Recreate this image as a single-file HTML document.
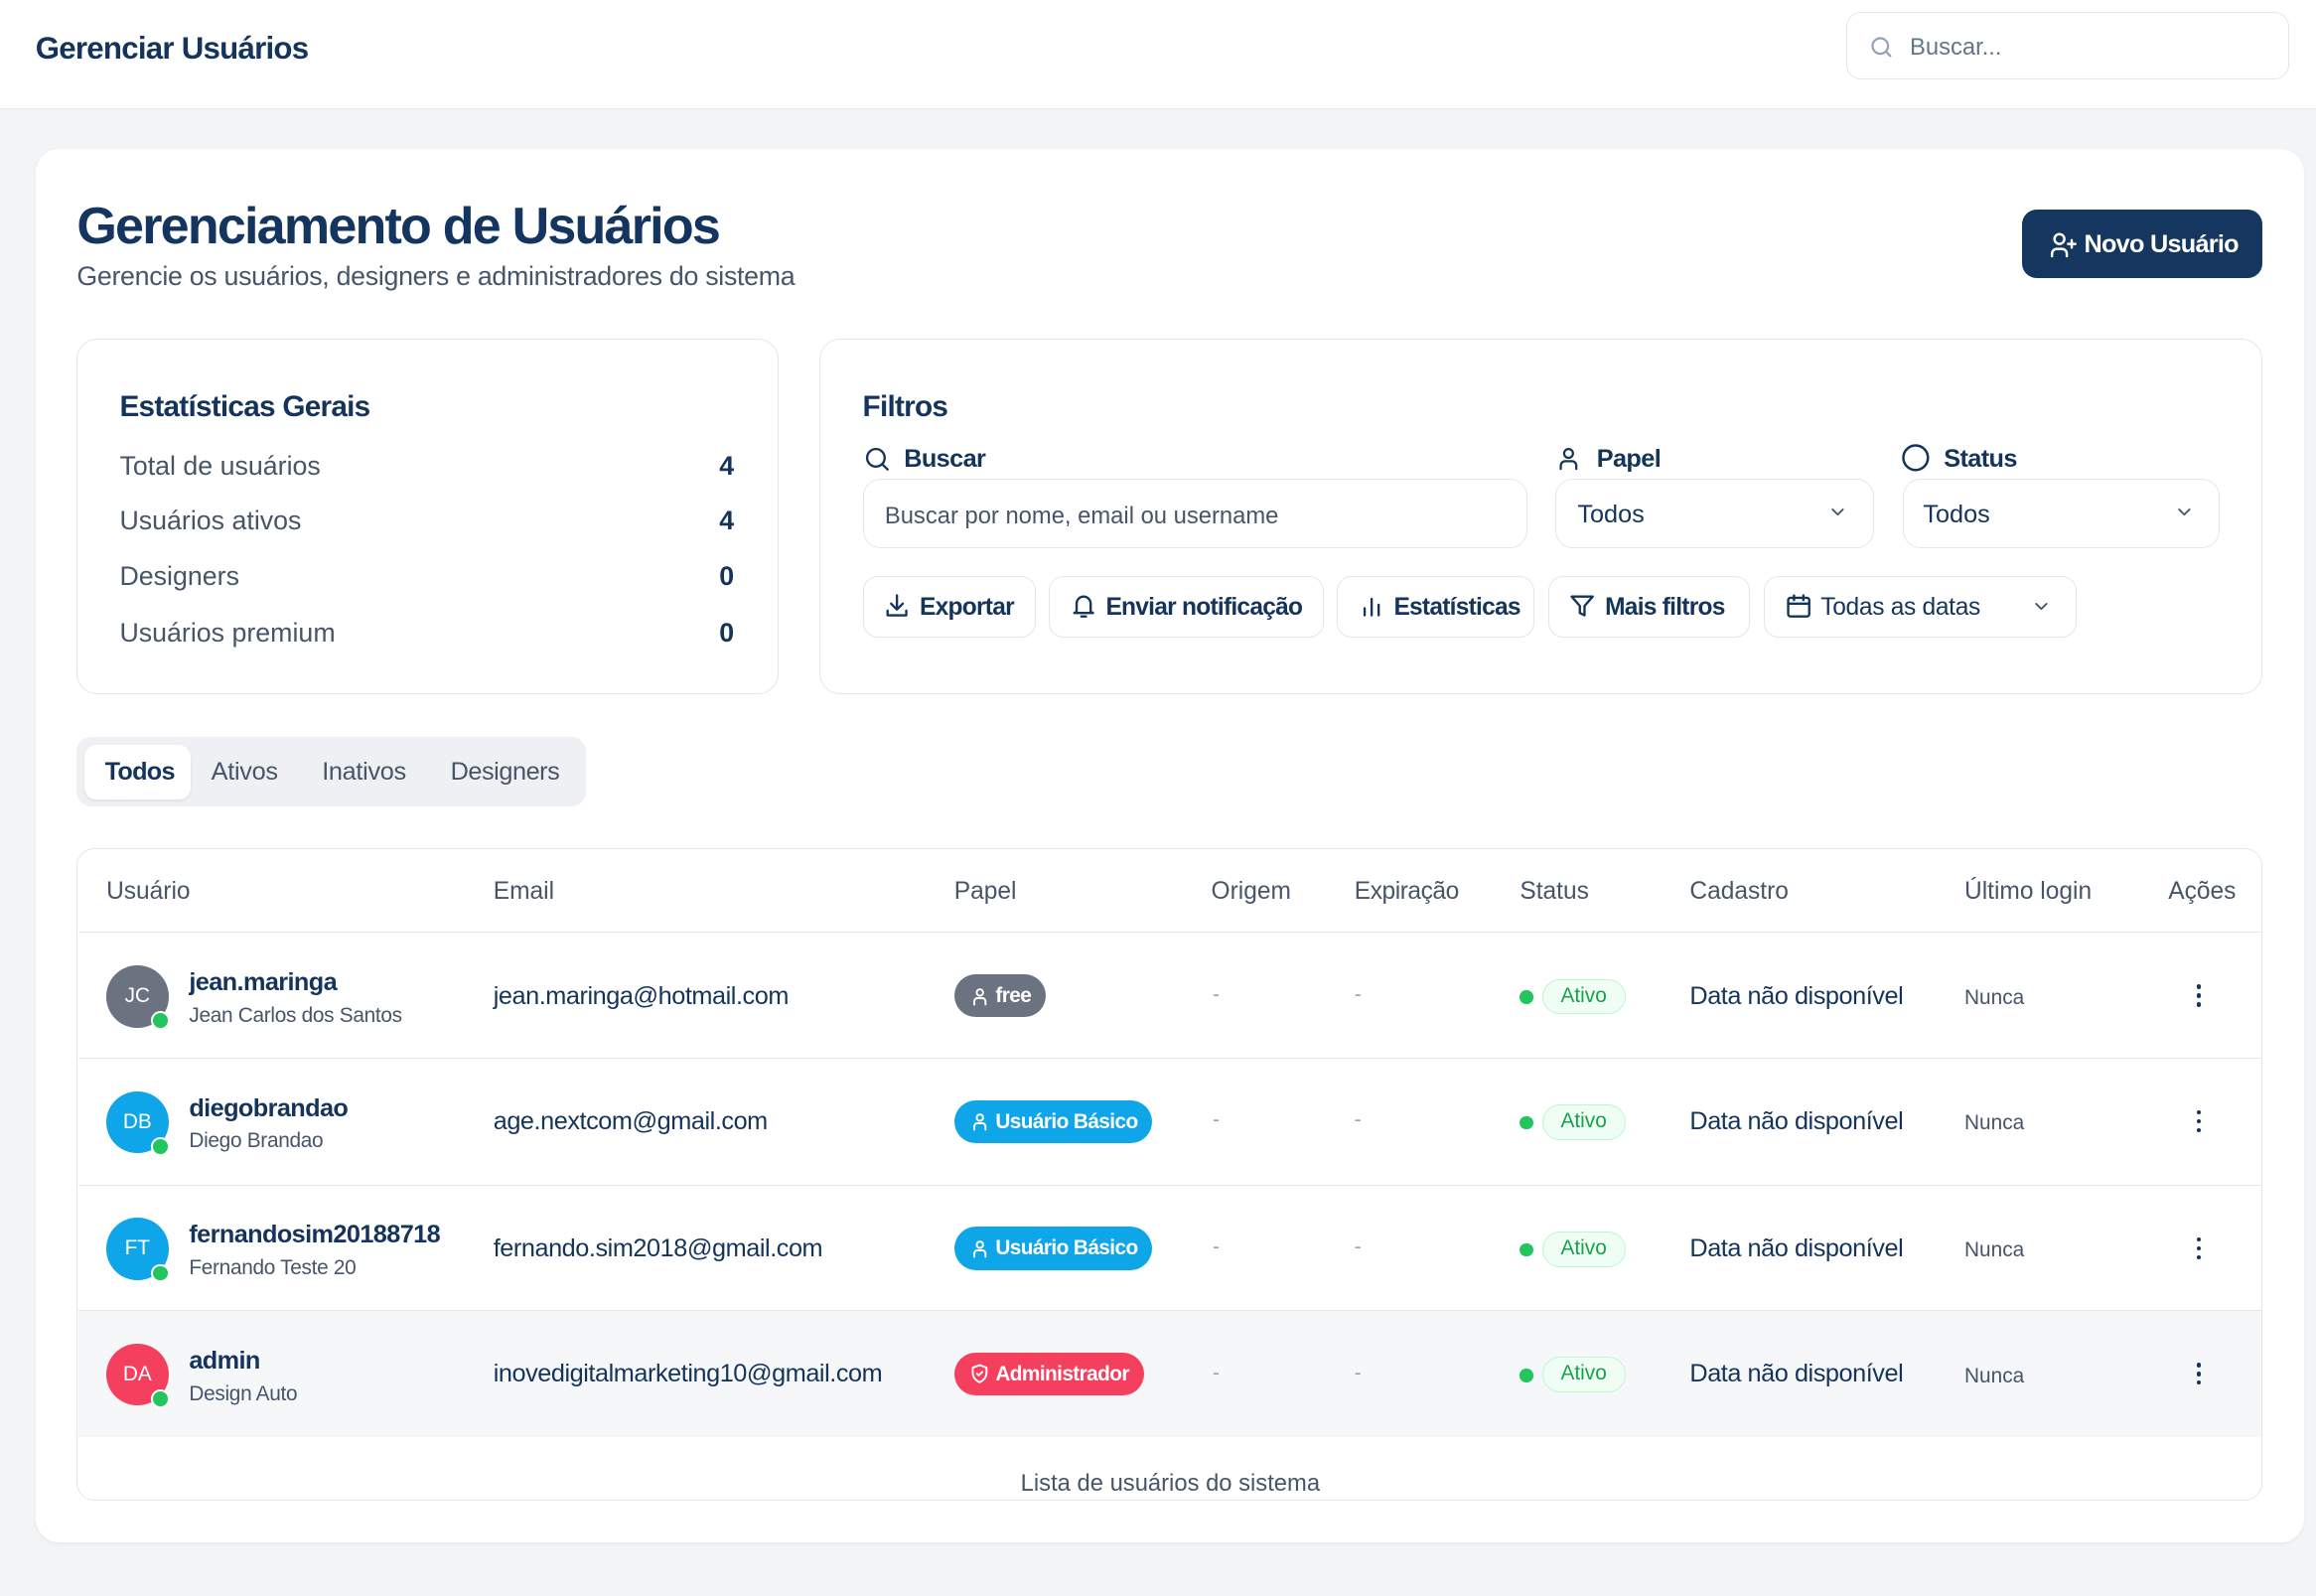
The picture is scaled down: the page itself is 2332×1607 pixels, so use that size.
<!DOCTYPE html>
<html><head><meta charset="utf-8"><style>
html,body{margin:0;padding:0;width:2332px;height:1607px;overflow:hidden;background:#f3f4f6}
#w{zoom:1.48724;width:1568px;height:1081px;position:relative;font-family:"Liberation Sans",sans-serif;color:#14345c}
.a{position:absolute;white-space:nowrap}
.box{position:absolute;box-sizing:border-box;border:1px solid #e3e6ea;background:#fff}
svg{position:absolute;fill:none;stroke-linecap:round;stroke-linejoin:round}
.btn{position:absolute;box-sizing:border-box;border:1px solid #e3e6ea;border-radius:10px;background:#fff;height:42px;top:390px;font-size:16.5px;line-height:42px;color:#14345c;font-weight:600;letter-spacing:-0.5px}
.h{top:604px;transform:translateY(-50%);font-size:16.5px;color:#475569}
.row{position:absolute;left:53px;width:1478px;height:85px;border-top:1px solid #e5e7eb}
.av{position:absolute;left:19px;top:22px;width:42px;height:42px;border-radius:50%;color:#fff;font-size:14px;text-align:center;line-height:42px}
.dot{position:absolute;left:49px;top:53px;width:10px;height:10px;border-radius:50%;background:#22c55e;border:1.5px solid #fff}
.nm{position:absolute;left:75px;top:24px;font-size:17px;font-weight:600;color:#14345c;letter-spacing:-0.4px}
.sn{position:absolute;left:75px;top:48px;font-size:14px;color:#475569;letter-spacing:-0.2px}
.em{position:absolute;left:281px;top:33px;font-size:17px;color:#14345c;letter-spacing:-0.3px}
.bd{position:absolute;left:593px;top:28px;height:29px;border-radius:15px;color:#fff;font-size:14px;font-weight:600;line-height:29px;padding:0 10px 0 28px;letter-spacing:-0.4px}
.ds{position:absolute;top:34px;font-size:14px;color:#94a3b8}
.gd{position:absolute;left:976px;top:39px;width:9px;height:9px;border-radius:50%;background:#22c55e}
.pl{position:absolute;left:991px;top:31px;height:24px;box-sizing:border-box;border:1px solid #bbf7d0;background:#f0fdf4;border-radius:12px;color:#16a34a;font-size:14px;line-height:22px;padding:0 12px}
.cd{position:absolute;left:1091px;top:33px;font-size:17px;color:#14345c;letter-spacing:-0.3px}
.nu{position:absolute;left:1277px;top:36px;font-size:14px;color:#475569}
.kb{position:absolute;left:1434px;top:35px;width:3px}
.kb i{display:block;width:3px;height:3px;border-radius:50%;background:#14345c;margin-bottom:3px}
</style></head><body><div id="w">
<div class="a" style="left:0;top:0;width:1568px;height:73px;background:#fff;border-bottom:1px solid #e5e7eb"></div>
<div class="a" style="left:24px;top:21px;font-size:21px;font-weight:600;color:#14345c;letter-spacing:-0.5px">Gerenciar Usuários</div>
<div class="box" style="left:1250px;top:8px;width:300px;height:46px;border-radius:10px"></div>
<svg style="left:1265px;top:23px" width="18" height="18" viewBox="0 0 24 24" stroke="#94a3b8" stroke-width="2"><circle cx="11" cy="11" r="7"/><path d="M20 20l-4-4"/></svg>
<div class="a" style="left:1293px;top:23px;font-size:16px;color:#64748b">Buscar...</div>

<div class="a" style="left:24px;top:101px;width:1536px;height:943px;background:#fff;border-radius:16px;box-shadow:0 1px 3px rgba(0,0,0,.05)"></div>
<div class="a" style="left:52px;top:133px;font-size:35px;font-weight:700;color:#133560;letter-spacing:-1.2px">Gerenciamento de Usuários</div>
<div class="a" style="left:52px;top:177px;font-size:18px;color:#475569;letter-spacing:-0.2px">Gerencie os usuários, designers e administradores do sistema</div>
<div class="a" style="left:1369px;top:142px;width:163px;height:46px;background:#14365f;border-radius:10px"></div>
<svg style="left:1386px;top:156px" width="22" height="20" viewBox="0 0 24 24" stroke="#fff" stroke-width="2"><circle cx="9" cy="7" r="4"/><path d="M3 21v-2a4 4 0 014-4h4a4 4 0 014 4v2M19 8v6M16 11h6"/></svg>
<div class="a" style="left:1411px;top:156px;font-size:17px;color:#fff;font-weight:600;letter-spacing:-0.5px">Novo Usuário</div>

<div class="box" style="left:52px;top:229px;width:475px;height:241px;border-radius:14px"></div>
<div class="a" style="left:81px;top:264px;font-size:20px;font-weight:600;letter-spacing:-0.5px">Estatísticas Gerais</div>
<div class="a" style="left:81px;top:305px;font-size:18px;color:#475569">Total de usuários</div><div class="a" style="left:487px;top:305px;font-size:18px;font-weight:600">4</div>
<div class="a" style="left:81px;top:342px;font-size:18px;color:#475569">Usuários ativos</div><div class="a" style="left:487px;top:342px;font-size:18px;font-weight:600">4</div>
<div class="a" style="left:81px;top:380px;font-size:18px;color:#475569">Designers</div><div class="a" style="left:487px;top:380px;font-size:18px;font-weight:600">0</div>
<div class="a" style="left:81px;top:418px;font-size:18px;color:#475569">Usuários premium</div><div class="a" style="left:487px;top:418px;font-size:18px;font-weight:600">0</div>

<div class="box" style="left:555px;top:229px;width:977px;height:241px;border-radius:14px"></div>
<div class="a" style="left:584px;top:264px;font-size:20px;font-weight:600;letter-spacing:-0.5px">Filtros</div>
<svg style="left:584px;top:301px" width="19" height="19" viewBox="0 0 24 24" stroke="#14345c" stroke-width="2"><circle cx="11" cy="11" r="7.5"/><path d="M21 21l-4.5-4.5"/></svg>
<div class="a" style="left:612px;top:301px;font-size:17px;font-weight:600;letter-spacing:-0.4px">Buscar</div>
<svg style="left:1053px;top:301px" width="18" height="19" viewBox="0 0 24 24" stroke="#14345c" stroke-width="2"><circle cx="12" cy="7" r="4"/><path d="M5 21v-3a4 4 0 014-4h6a4 4 0 014 4v3"/></svg>
<div class="a" style="left:1081px;top:301px;font-size:17px;font-weight:600;letter-spacing:-0.4px">Papel</div>
<svg style="left:1287px;top:300px" width="20" height="20" viewBox="0 0 24 24" stroke="#14345c" stroke-width="2"><circle cx="12" cy="12" r="10"/></svg>
<div class="a" style="left:1316px;top:301px;font-size:17px;font-weight:600;letter-spacing:-0.4px">Status</div>
<div class="box" style="left:584px;top:324px;width:450px;height:47px;border-radius:12px"></div>
<div class="a" style="left:599px;top:340px;font-size:16px;color:#475569">Buscar por nome, email ou username</div>
<div class="box" style="left:1053px;top:324px;width:216px;height:47px;border-radius:12px"></div>
<div class="a" style="left:1068px;top:339px;font-size:17px">Todos</div>
<svg style="left:1237px;top:341px" width="14" height="12" viewBox="0 0 24 24" stroke="#475569" stroke-width="2.5"><path d="M5 8l7 7 7-7"/></svg>
<div class="box" style="left:1288px;top:324px;width:215px;height:47px;border-radius:12px"></div>
<div class="a" style="left:1302px;top:339px;font-size:17px">Todos</div>
<svg style="left:1472px;top:341px" width="14" height="12" viewBox="0 0 24 24" stroke="#475569" stroke-width="2.5"><path d="M5 8l7 7 7-7"/></svg>

<div class="btn" style="left:584px;width:117px;padding-left:38px">Exportar</div>
<svg style="left:598px;top:401px" width="19" height="19" viewBox="0 0 24 24" stroke="#14345c" stroke-width="2"><path d="M12 3v12M7 10l5 5 5-5M4 16v4h16v-4"/></svg>
<div class="btn" style="left:710px;width:186px;padding-left:38px">Enviar notificação</div>
<svg style="left:724px;top:401px" width="19" height="19" viewBox="0 0 24 24" stroke="#14345c" stroke-width="2"><path d="M6 17V10a6 6 0 0112 0v7l2 1H4zM10 21h4"/></svg>
<div class="btn" style="left:905px;width:134px;padding-left:38px">Estatísticas</div>
<svg style="left:919px;top:401px" width="19" height="19" viewBox="0 0 24 24" stroke="#14345c" stroke-width="2"><path d="M6 20v-6M12 20V6M18 20v-9"/></svg>
<div class="btn" style="left:1048px;width:137px;padding-left:38px">Mais filtros</div>
<svg style="left:1062px;top:401px" width="19" height="19" viewBox="0 0 24 24" stroke="#14345c" stroke-width="2"><path d="M3 4h18l-7 8v8l-4-2v-6z"/></svg>
<div class="btn" style="left:1194px;width:212px;padding-left:38px;font-weight:400;letter-spacing:-0.2px">Todas as datas</div>
<svg style="left:1208px;top:401px" width="19" height="19" viewBox="0 0 24 24" stroke="#14345c" stroke-width="2"><rect x="3" y="5" width="18" height="16" rx="2"/><path d="M3 10h18M8 3v4M16 3v4"/></svg>
<svg style="left:1375px;top:405px" width="14" height="12" viewBox="0 0 24 24" stroke="#475569" stroke-width="2.5"><path d="M5 8l7 7 7-7"/></svg>

<div class="a" style="left:52px;top:499px;width:345px;height:47px;background:#eef0f3;border-radius:10px"></div>
<div class="a" style="left:57px;top:504px;width:72px;height:37px;background:#fff;border-radius:8px;box-shadow:0 1px 2px rgba(0,0,0,.08)"></div>
<div class="a" style="left:71px;top:513px;font-size:17px;font-weight:600;letter-spacing:-0.5px">Todos</div>
<div class="a" style="left:143px;top:513px;font-size:17px;color:#475569;letter-spacing:-0.2px">Ativos</div>
<div class="a" style="left:218px;top:513px;font-size:17px;color:#475569;letter-spacing:-0.2px">Inativos</div>
<div class="a" style="left:305px;top:513px;font-size:17px;color:#475569;letter-spacing:-0.3px">Designers</div>

<div class="box" style="left:52px;top:574px;width:1480px;height:442px;border-radius:12px;overflow:hidden"></div>
<div class="a h" style="left:72px">Usuário</div>
<div class="a h" style="left:334px">Email</div>
<div class="a h" style="left:646px">Papel</div>
<div class="a h" style="left:820px">Origem</div>
<div class="a h" style="left:917px;letter-spacing:-0.3px">Expiração</div>
<div class="a h" style="left:1029px">Status</div>
<div class="a h" style="left:1144px">Cadastro</div>
<div class="a h" style="left:1330px">Último login</div>
<div class="a h" style="left:1468px">Ações</div>

<div class="row" style="top:631px">
<div class="av" style="background:#6b7280">JC</div><div class="dot"></div>
<div class="nm">jean.maringa</div><div class="sn">Jean Carlos dos Santos</div>
<div class="em">jean.maringa@hotmail.com</div>
<div class="bd" style="background:#6b7280">free</div>
<svg style="left:604px;top:36px" width="13" height="14" viewBox="0 0 24 24" stroke="#fff" stroke-width="2.4"><circle cx="12" cy="7" r="4"/><path d="M5 22v-4a4 4 0 014-4h6a4 4 0 014 4v4"/></svg>
<div class="ds" style="left:768px">-</div><div class="ds" style="left:864px">-</div>
<div class="gd"></div><div class="pl">Ativo</div><div class="cd">Data não disponível</div><div class="nu">Nunca</div>
<div class="kb"><i></i><i></i><i></i></div></div>

<div class="row" style="top:716px">
<div class="av" style="background:#0ea5e9">DB</div><div class="dot"></div>
<div class="nm">diegobrandao</div><div class="sn">Diego Brandao</div>
<div class="em">age.nextcom@gmail.com</div>
<div class="bd" style="background:#0ea5e9">Usuário Básico</div>
<svg style="left:604px;top:36px" width="13" height="14" viewBox="0 0 24 24" stroke="#fff" stroke-width="2.4"><circle cx="12" cy="7" r="4"/><path d="M5 22v-4a4 4 0 014-4h6a4 4 0 014 4v4"/></svg>
<div class="ds" style="left:768px">-</div><div class="ds" style="left:864px">-</div>
<div class="gd"></div><div class="pl">Ativo</div><div class="cd">Data não disponível</div><div class="nu">Nunca</div>
<div class="kb"><i></i><i></i><i></i></div></div>

<div class="row" style="top:802px">
<div class="av" style="background:#0ea5e9">FT</div><div class="dot"></div>
<div class="nm">fernandosim20188718</div><div class="sn">Fernando Teste 20</div>
<div class="em">fernando.sim2018@gmail.com</div>
<div class="bd" style="background:#0ea5e9">Usuário Básico</div>
<svg style="left:604px;top:36px" width="13" height="14" viewBox="0 0 24 24" stroke="#fff" stroke-width="2.4"><circle cx="12" cy="7" r="4"/><path d="M5 22v-4a4 4 0 014-4h6a4 4 0 014 4v4"/></svg>
<div class="ds" style="left:768px">-</div><div class="ds" style="left:864px">-</div>
<div class="gd"></div><div class="pl">Ativo</div><div class="cd">Data não disponível</div><div class="nu">Nunca</div>
<div class="kb"><i></i><i></i><i></i></div></div>

<div class="row" style="top:887px;background:#f5f7f9">
<div class="av" style="background:#f43f5e">DA</div><div class="dot"></div>
<div class="nm">admin</div><div class="sn">Design Auto</div>
<div class="em">inovedigitalmarketing10@gmail.com</div>
<div class="bd" style="background:#f43f5e">Administrador</div>
<svg style="left:603px;top:35px" width="14" height="15" viewBox="0 0 24 24" stroke="#fff" stroke-width="2.2"><path d="M12 2l8 3v6c0 5-3.5 9-8 11-4.5-2-8-6-8-11V5z"/><path d="M9 12l2 2 4-4"/></svg>
<div class="ds" style="left:768px">-</div><div class="ds" style="left:864px">-</div>
<div class="gd"></div><div class="pl">Ativo</div><div class="cd">Data não disponível</div><div class="nu">Nunca</div>
<div class="kb"><i></i><i></i><i></i></div></div>

<div class="a" style="left:691px;top:995px;font-size:16px;color:#475569">Lista de usuários do sistema</div>
</div></body></html>
